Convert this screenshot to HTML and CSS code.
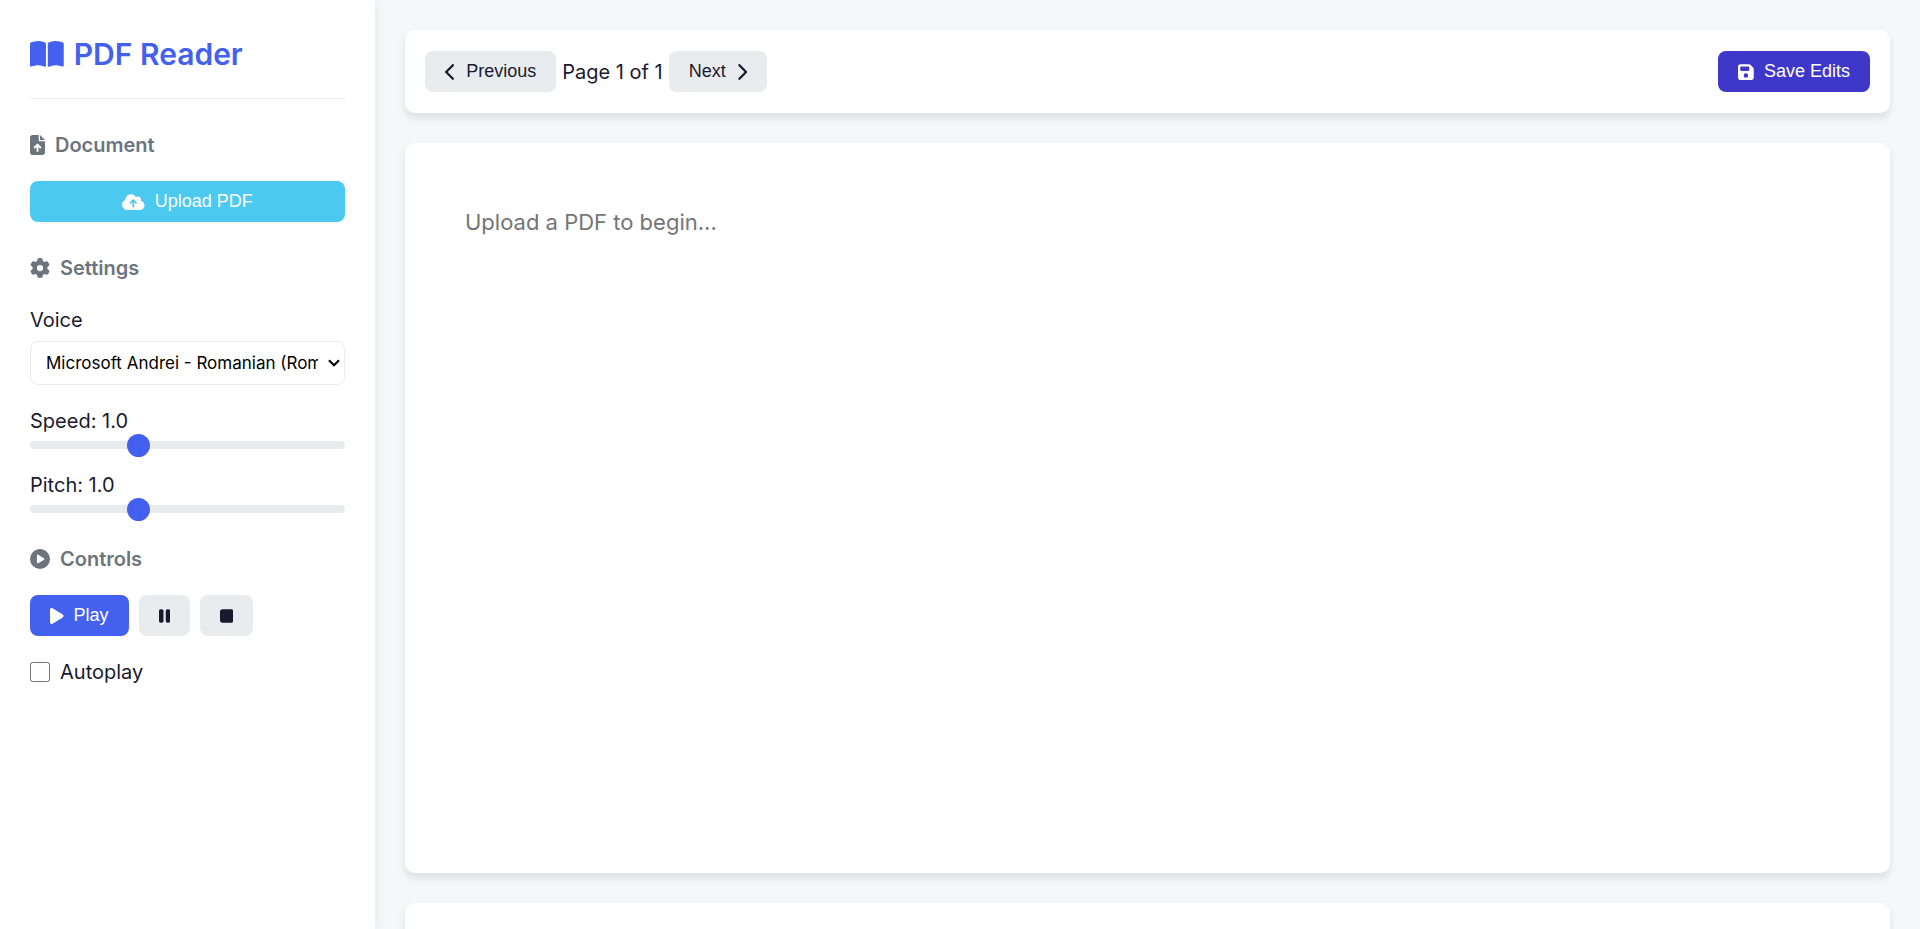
FILE: index.html
```html
<!DOCTYPE html>
<html lang="en">
<head>
    <meta charset="UTF-8">
    <meta name="viewport" content="width=device-width, initial-scale=1.0">
    <title>PDF Reader</title>
    <link rel="stylesheet" href="styles.css">
</head>
<body>
    <div class="app">
        <aside class="sidebar">
            <h1 class="logo">
                <svg class="icon" viewBox="0 0 576 512" aria-hidden="true"><path d="M249.6 471.5c10.8 3.8 22.4-4.1 22.4-15.5V78.6c0-4.2-1.6-8.4-5-11C247.4 52 202.4 32 144 32C93.5 32 46.3 45.3 18.1 56.1C6.8 60.5 0 71.7 0 83.8V454.1c0 11.9 12.8 20.2 24.1 16.5C55.6 460.1 105.5 448 144 448c33.9 0 79 14 105.6 23.5zm76.8 0C353 462 398.1 448 432 448c38.5 0 88.4 12.1 119.9 22.6c11.3 3.8 24.1-4.6 24.1-16.5V83.8c0-12.1-6.8-23.3-18.1-27.6C529.7 45.3 482.5 32 432 32c-58.4 0-103.4 20-123 35.6c-3.3 2.6-5 6.8-5 11V456c0 11.4 11.7 19.3 22.4 15.5z"/></svg>
                PDF Reader
            </h1>

            <section class="section">
                <h2 class="section-title">
                    <svg class="icon" viewBox="0 0 384 512" aria-hidden="true"><path d="M64 0C28.7 0 0 28.7 0 64V448c0 35.3 28.7 64 64 64H320c35.3 0 64-28.7 64-64V160H256c-17.7 0-32-14.3-32-32V0H64zM256 0V128H384L256 0zM216 408c0 13.3-10.7 24-24 24s-24-10.7-24-24V305.9l-31 31c-9.4 9.4-24.6 9.4-33.9 0s-9.4-24.6 0-33.9l72-72c9.4-9.4 24.6-9.4 33.9 0l72 72c9.4 9.4 9.4 24.6 0 33.9s-24.6 9.4-33.9 0l-31-31V408z"/></svg>
                    Document
                </h2>
                <button class="btn btn-upload" type="button">
                    <svg class="icon" viewBox="0 0 640 512" aria-hidden="true"><path d="M144 480C64.5 480 0 415.5 0 336c0-62.8 40.2-116.2 96.2-135.9c-.1-2.7-.2-5.4-.2-8.1c0-88.4 71.6-160 160-160c59.3 0 111 32.2 138.7 80.2C409.9 102 428.3 96 448 96c53 0 96 43 96 96c0 12.2-2.3 23.8-6.4 34.6C596 238.4 640 290.1 640 352c0 70.7-57.3 128-128 128H144zm79-217c-9.4 9.4-9.4 24.6 0 33.9s24.6 9.4 33.9 0l39-39V392c0 13.3 10.7 24 24 24s24-10.7 24-24V257.9l39 39c9.4 9.4 24.6 9.4 33.9 0s9.4-24.6 0-33.9l-80-80c-9.4-9.4-24.6-9.4-33.9 0l-80 80z"/></svg>
                    Upload PDF
                </button>
            </section>

            <section class="section">
                <h2 class="section-title">
                    <svg class="icon" viewBox="0 0 512 512" aria-hidden="true"><path d="M495.9 166.6c3.2 8.7 .5 18.4-6.4 24.6l-43.3 39.4c1.1 8.3 1.7 16.8 1.7 25.4s-.6 17.1-1.7 25.4l43.3 39.4c6.9 6.2 9.6 15.9 6.4 24.6c-4.4 11.9-9.7 23.3-15.8 34.3l-4.7 8.1c-6.6 11-14 21.4-22.1 31.2c-5.9 7.2-15.7 9.6-24.5 6.8l-55.7-17.7c-13.4 10.3-28.2 18.9-44 25.4l-12.5 57.1c-2 9.1-9 16.3-18.2 17.8c-13.8 2.3-28 3.5-42.5 3.5s-28.7-1.2-42.5-3.5c-9.2-1.5-16.2-8.7-18.2-17.8l-12.5-57.1c-15.8-6.5-30.6-15.1-44-25.4L83.1 425.9c-8.8 2.8-18.6 .3-24.5-6.8c-8.1-9.8-15.5-20.2-22.1-31.2l-4.7-8.1c-6.1-11-11.4-22.4-15.8-34.3c-3.2-8.7-.5-18.4 6.4-24.6l43.3-39.4C64.6 273.1 64 264.6 64 256s.6-17.1 1.7-25.4L22.4 191.2c-6.9-6.2-9.6-15.9-6.4-24.6c4.4-11.9 9.7-23.3 15.8-34.3l4.7-8.1c6.6-11 14-21.4 22.1-31.2c5.9-7.2 15.7-9.6 24.5-6.8l55.7 17.7c13.4-10.3 28.2-18.9 44-25.4l12.5-57.1c2-9.1 9-16.3 18.2-17.8C227.3 1.2 241.5 0 256 0s28.7 1.2 42.5 3.5c9.2 1.5 16.2 8.7 18.2 17.8l12.5 57.1c15.8 6.5 30.6 15.1 44 25.4l55.7-17.7c8.8-2.8 18.6-.3 24.5 6.8c8.1 9.8 15.5 20.2 22.1 31.2l4.7 8.1c6.1 11 11.4 22.4 15.8 34.3zM256 336a80 80 0 1 0 0-160 80 80 0 1 0 0 160z"/></svg>
                    Settings
                </h2>
                <div class="control-group">
                    <label for="voice">Voice</label>
                    <select id="voice">
                        <option>Microsoft Andrei - Romanian (Romania)</option>
                    </select>
                </div>
                <div class="control-group">
                    <label for="speed">Speed: <span id="speedValue">1.0</span></label>
                    <input type="range" id="speed" min="0.5" max="2" step="0.1" value="1">
                </div>
                <div class="control-group">
                    <label for="pitch">Pitch: <span id="pitchValue">1.0</span></label>
                    <input type="range" id="pitch" min="0.5" max="2" step="0.1" value="1">
                </div>
            </section>

            <section class="section">
                <h2 class="section-title">
                    <svg class="icon" viewBox="0 0 512 512" aria-hidden="true"><path fill-rule="evenodd" d="M0 256a256 256 0 1 1 512 0A256 256 0 1 1 0 256zM188.3 147.1c-7.6 4.2-12.3 12.3-12.3 20.9V344c0 8.7 4.7 16.7 12.3 20.9s16.8 4.1 24.3-.5l144-88c7.1-4.4 11.5-12.1 11.5-20.5s-4.4-16.1-11.5-20.5l-144-88c-7.4-4.5-16.7-4.7-24.3-.5z"/></svg>
                    Controls
                </h2>
                <div class="button-row">
                    <button class="btn btn-primary" type="button">
                        <svg class="icon" viewBox="0 0 384 512" aria-hidden="true"><path d="M73 39c-14.8-9.1-33.4-9.4-48.5-.9S0 62.6 0 80V432c0 17.4 9.4 33.4 24.5 41.9s33.7 8.1 48.5-.9L361 297c14.3-8.7 23-24.2 23-41s-8.7-32.2-23-41L73 39z"/></svg>
                        Play
                    </button>
                    <button class="btn" type="button" aria-label="Pause">
                        <svg class="icon" viewBox="0 0 320 512" aria-hidden="true"><path d="M48 64C21.5 64 0 85.5 0 112V400c0 26.5 21.5 48 48 48H80c26.5 0 48-21.5 48-48V112c0-26.5-21.5-48-48-48H48zm192 0c-26.5 0-48 21.5-48 48V400c0 26.5 21.5 48 48 48h32c26.5 0 48-21.5 48-48V112c0-26.5-21.5-48-48-48H240z"/></svg>
                    </button>
                    <button class="btn" type="button" aria-label="Stop">
                        <svg class="icon" viewBox="0 0 384 512" aria-hidden="true"><path d="M0 128C0 92.7 28.7 64 64 64H320c35.3 0 64 28.7 64 64V384c0 35.3-28.7 64-64 64H64c-35.3 0-64-28.7-64-64V128z"/></svg>
                    </button>
                </div>
                <div class="checkbox-row">
                    <input type="checkbox" id="autoplay">
                    <label for="autoplay">Autoplay</label>
                </div>
            </section>
        </aside>

        <main class="content">
            <div class="toolbar">
                <div class="pager">
                    <button class="btn" type="button">
                        <svg class="icon" viewBox="0 0 320 512" aria-hidden="true"><path d="M9.4 233.4c-12.5 12.5-12.5 32.8 0 45.3l192 192c12.5 12.5 32.8 12.5 45.3 0s12.5-32.8 0-45.3L77.3 256 246.6 86.6c12.5-12.5 12.5-32.8 0-45.3s-32.8-12.5-45.3 0l-192 192z"/></svg>
                        Previous
                    </button>
                    <span>Page 1 of 1</span>
                    <button class="btn" type="button">
                        Next
                        <svg class="icon" viewBox="0 0 320 512" aria-hidden="true"><path d="M310.6 233.4c12.5 12.5 12.5 32.8 0 45.3l-192 192c-12.5 12.5-32.8 12.5-45.3 0s-12.5-32.8 0-45.3L242.7 256 73.4 86.6c-12.5-12.5-12.5-32.8 0-45.3s32.8-12.5 45.3 0l192 192z"/></svg>
                    </button>
                </div>
                <button class="btn btn-save" type="button">
                    <svg class="icon" viewBox="0 0 448 512" aria-hidden="true"><path fill-rule="evenodd" d="M64 32C28.7 32 0 60.7 0 96V416c0 35.3 28.7 64 64 64H384c35.3 0 64-28.7 64-64V173.3c0-17-6.7-33.3-18.7-45.3L352 50.7C340 38.7 323.7 32 306.7 32H64zm0 96c0-17.7 14.3-32 32-32H288c17.7 0 32 14.3 32 32v64c0 17.7-14.3 32-32 32H96c-17.7 0-32-14.3-32-32V128zM224 288a64 64 0 1 1 0 128 64 64 0 1 1 0-128z"/></svg>
                    Save Edits
                </button>
            </div>
            <textarea class="editor" aria-label="Document text" placeholder="Upload a PDF to begin..."></textarea>
            <div class="viewer"></div>
        </main>
    </div>

    <script>
        ['speed', 'pitch'].forEach(id => {
            const slider = document.getElementById(id);
            slider.addEventListener('input', () => {
                document.getElementById(id + 'Value').textContent = Number(slider.value).toFixed(1);
            });
        });
    </script>
</body>
</html>
```
FILE: styles.css
```css
:root {
    --primary: #4361ee;
    --secondary: #3f37c9;
    --accent: #4cc9f0;
    --light: #e9ecef;
    --gray: #6c757d;
    --dark: #1a1a2e;
    --shadow: 0 5px 8px rgba(0, 0, 0, 0.1);
}
* {
    box-sizing: border-box;
    margin: 0;
    padding: 0;
}
body {
    font-family: Inter, sans-serif;
    font-size: 20px;
    line-height: 32px;
    color: var(--dark);
    background-color: #f5f7fb;
}
.app {
    display: grid;
    grid-template-columns: 375px 1fr;
    height: 100vh;
}
.icon {
    height: 1em;
    flex-shrink: 0;
    fill: currentColor;
}

/* Sidebar */
.sidebar {
    padding: 30px;
    background-color: white;
    box-shadow: 2px 0 10px rgba(0, 0, 0, 0.06);
}
.logo {
    display: flex;
    align-items: center;
    gap: 10px;
    padding-bottom: 20px;
    margin-bottom: 30px;
    border-bottom: 1px solid var(--light);
    font-size: 30px;
    font-weight: 600;
    line-height: 48px;
    color: var(--primary);
}
.section {
    margin-bottom: 30px;
}
.section-title {
    display: flex;
    align-items: center;
    gap: 10px;
    margin-bottom: 20px;
    font-size: 20px;
    font-weight: 600;
    color: var(--gray);
}
.control-group {
    margin-bottom: 20px;
}
.control-group label {
    display: block;
}
select {
    width: 100%;
    height: 44px;
    margin-top: 5px;
    padding: 0 26px 0 15px;
    border: 1px solid var(--light);
    border-radius: 8px;
    background: white url("data:image/svg+xml,%3Csvg xmlns='http://www.w3.org/2000/svg' width='12' height='8' viewBox='0 0 12 8'%3E%3Cpath d='M1 1.2l5 5 5-5' fill='none' stroke='%23000' stroke-width='2.2'/%3E%3C/svg%3E") no-repeat right 4px center;
    appearance: none;
    color: black;
    font-family: Inter, sans-serif;
    font-size: 17px;
}
input[type="range"] {
    display: block;
    width: 100%;
    height: 8px;
    margin: 4px 0 5px;
    border-radius: 4px;
    background: var(--light);
    appearance: none;
}
input[type="range"]::-webkit-slider-thumb {
    width: 23px;
    height: 23px;
    border-radius: 50%;
    background: var(--primary);
    appearance: none;
    cursor: pointer;
}
.button-row {
    display: flex;
    gap: 10px;
    margin-bottom: 20px;
}
.checkbox-row {
    display: flex;
    align-items: center;
    gap: 10px;
}
.checkbox-row input {
    width: 20px;
    height: 20px;
}

/* Buttons */
.btn {
    display: flex;
    align-items: center;
    justify-content: center;
    gap: 10px;
    height: 41px;
    padding: 0 20px;
    border: none;
    border-radius: 8px;
    background-color: var(--light);
    color: var(--dark);
    font-family: "Liberation Sans", Arial, sans-serif;
    font-size: 18px;
    cursor: pointer;
}
.btn-upload {
    width: 100%;
    background-color: var(--accent);
    color: white;
}
.btn-primary {
    background-color: var(--primary);
    color: white;
}
.btn-save {
    background-color: var(--secondary);
    color: white;
}

/* Main content */
.content {
    display: flex;
    flex-direction: column;
    gap: 30px;
    padding: 30px;
    overflow-y: auto;
    scrollbar-width: none;
}
.toolbar {
    display: flex;
    flex-shrink: 0;
    justify-content: space-between;
    align-items: center;
    padding: 21px 20px;
    border-radius: 10px;
    background-color: white;
    box-shadow: var(--shadow);
}
.pager {
    display: flex;
    align-items: center;
    gap: 6px;
}
.editor {
    flex-shrink: 0;
    width: 100%;
    height: calc(100vh - 199px);
    padding: 60px;
    border: none;
    border-radius: 10px;
    outline: none;
    resize: none;
    background-color: white;
    box-shadow: var(--shadow);
    font-family: Inter, sans-serif;
    font-size: 22px;
    line-height: 38px;
    color: var(--dark);
}
.editor::placeholder {
    color: #757575;
}
.viewer {
    flex-shrink: 0;
    min-height: 100px;
    border-radius: 10px;
    background-color: white;
    box-shadow: var(--shadow);
}
```
